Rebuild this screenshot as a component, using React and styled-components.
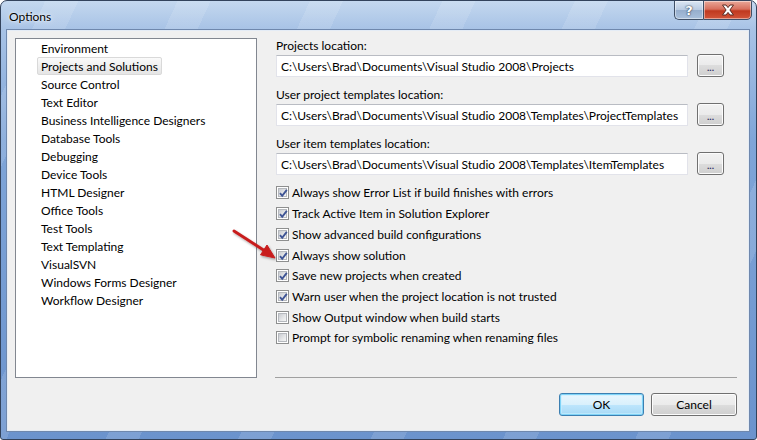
import styled, { createGlobalStyle, css } from "styled-components";

const GlobalStyle = createGlobalStyle`
  html, body {
    margin: 0;
    padding: 0;
    background: #ffffff;
  }
  body {
    font-family: Lato, "Liberation Sans", sans-serif;
    font-size: 12px;
    color: #000000;
  }
`;

const Window = styled.div`
  position: relative;
  box-sizing: border-box;
  width: 757px;
  height: 440px;
  display: flex;
  flex-direction: column;
  padding: 0 7px 8px 6px;
  border: 1px solid #33435c;
  border-radius: 7px 7px 3px 3px;
  overflow: hidden;
  background:
    repeating-linear-gradient(115deg, rgba(255, 255, 255, 0) 0 40px, rgba(255, 255, 255, 0.12) 40px 70px, rgba(255, 255, 255, 0) 70px 120px),
    linear-gradient(180deg, #c4d8ef 0, #a8c3e6 28px, #7fa5d8 140px, #6b93cd 100%);
`;

const TitleBar = styled.div`
  height: 29px;
  flex: none;
  display: flex;
  justify-content: space-between;
  margin: 0 -7px 0 -6px;
  padding: 0 4px 0 8px;
`;

const Title = styled.div`
  align-self: center;
  margin-top: 1px;
  font-size: 12px;
  text-shadow: 0 0 6px rgba(255, 255, 255, 0.9), 0 0 2px rgba(255, 255, 255, 0.9);
`;

const Caption = styled.div`
  display: flex;
  align-self: flex-start;
  margin-top: -1px;
`;

const captionBase = css`
  box-sizing: border-box;
  height: 20px;
  display: flex;
  align-items: center;
  justify-content: center;
  border: 1px solid #3f4f66;
  box-shadow: inset 0 0 0 1px rgba(255, 255, 255, 0.45);
`;

const HelpBtn = styled.div`
  ${captionBase};
  width: 29px;
  border-right: none;
  border-radius: 0 0 0 5px;
  background: linear-gradient(180deg, #dbe6f3 0%, #b9cbe2 48%, #96aecd 52%, #a9c0dc 100%);
  color: #ffffff;
  font-family: "DejaVu Sans", sans-serif;
  font-weight: bold;
  font-size: 13px;
  text-shadow: 0 0 2px #2d3a4e, 0 0 1px #2d3a4e;
`;

const CloseBtn = styled.div`
  ${captionBase};
  width: 49px;
  border-radius: 0 0 5px 0;
  background: linear-gradient(180deg, #e9a899 0%, #d7705e 45%, #c0391f 55%, #d2553a 100%);
`;

const Client = styled.div`
  flex: 1;
  box-sizing: border-box;
  display: flex;
  flex-direction: column;
  padding: 7px 11px 0 7px;
  background: #f0f0f0;
  border: 1px solid #e4ecf6;
  box-shadow: 0 0 0 1px #6f88ad;
`;

const Body = styled.div`
  display: flex;
  gap: 18px;
  height: 340px;
`;

const TreeList = styled.div`
  box-sizing: border-box;
  width: 242px;
  flex: none;
  border: 1px solid #828790;
  background: #ffffff;
`;

const TreeRow = styled.div`
  height: 18px;
  display: flex;
  padding-left: 21px;
`;

const TreeItem = styled.div`
  box-sizing: border-box;
  display: flex;
  align-items: center;
  padding: 0 3px;
  border: 1px solid transparent;
  border-radius: 2px;
  ${(p) =>
    p.$selected &&
    css`
      border-color: #d9d9d9;
      background: linear-gradient(180deg, #fafafa, #e5e5e5);
    `}
`;

const Panel = styled.div`
  flex: 1;
  display: flex;
  flex-direction: column;
  padding-left: 1px;
`;

const Fields = styled.div`
  display: flex;
  flex-direction: column;
  gap: 10px;
`;

const FieldLabel = styled.div`
  height: 16px;
  line-height: 16px;
  margin-bottom: 1px;
`;

const FieldRow = styled.div`
  display: flex;
  gap: 9px;
`;

const PathBox = styled.div`
  box-sizing: border-box;
  width: 412px;
  height: 22px;
  display: flex;
  align-items: center;
  padding: 0 4px;
  background: #ffffff;
  border: 1px solid #e2e3ea;
  border-top-color: #b9bcc3;
  white-space: nowrap;
  overflow: hidden;
`;

const pushButton = css`
  box-sizing: border-box;
  display: flex;
  align-items: center;
  justify-content: center;
  border: 1px solid #707070;
  border-radius: 3px;
  background: linear-gradient(180deg, #f2f2f2 0%, #ebebeb 50%, #dddddd 50%, #cfcfcf 100%);
  box-shadow: inset 0 0 0 1px #fcfcfc;
  font-family: inherit;
  font-size: 12px;
  color: #000000;
`;

const BrowseBtn = styled.div`
  ${pushButton};
  width: 27px;
  height: 23px;
  margin-top: -1px;
  padding-top: 3px;
  font-size: 10px;
  font-weight: bold;
  color: #333366;
`;

const Checks = styled.div`
  margin-top: 7.6px;
  display: flex;
  flex-direction: column;
`;

const CheckRow = styled.div`
  height: 20.7px;
  display: flex;
  align-items: center;
  gap: 3px;
`;

const CheckBox = styled.span`
  position: relative;
  box-sizing: border-box;
  width: 13px;
  height: 13px;
  flex: none;
  border: 1px solid #8e8f8f;
  background: #ffffff;
  &::before {
    content: "";
    position: absolute;
    inset: 1px;
    background: linear-gradient(135deg, #c9ccd1 0%, #e6e7e9 60%, #f5f5f5 100%);
    border: 1px solid #b5b8bd;
    box-sizing: border-box;
  }
  svg {
    position: absolute;
    left: 0;
    top: 0;
  }
`;

const Separator = styled.div`
  margin-top: auto;
  margin-left: -1px;
  height: 1px;
  background: #a0a0a0;
`;

const Footer = styled.div`
  display: flex;
  justify-content: flex-end;
  gap: 7px;
  margin-top: 15px;
`;

const DlgButton = styled.div`
  ${pushButton};
  width: ${(p) => p.$width}px;
  height: 23px;
  ${(p) =>
    p.$default &&
    css`
      border-color: #3c7fb1;
      background: linear-gradient(180deg, #eaf6fd 0%, #d9f0fc 50%, #bee6fd 50%, #a7d9f5 100%);
      box-shadow: inset 0 0 0 1px #7fd3f7, inset 0 0 0 2px rgba(200, 238, 255, 0.6);
    `}
`;

const Arrow = styled.svg`
  position: absolute;
  left: 0;
  top: 0;
  pointer-events: none;
`;

const pages = [
  "Environment",
  "Projects and Solutions",
  "Source Control",
  "Text Editor",
  "Business Intelligence Designers",
  "Database Tools",
  "Debugging",
  "Device Tools",
  "HTML Designer",
  "Office Tools",
  "Test Tools",
  "Text Templating",
  "VisualSVN",
  "Windows Forms Designer",
  "Workflow Designer",
];

const locations = [
  ["Projects location:", "C:\\Users\\Brad\\Documents\\Visual Studio 2008\\Projects"],
  ["User project templates location:", "C:\\Users\\Brad\\Documents\\Visual Studio 2008\\Templates\\ProjectTemplates"],
  ["User item templates location:", "C:\\Users\\Brad\\Documents\\Visual Studio 2008\\Templates\\ItemTemplates"],
];

const options = [
  ["Always show Error List if build finishes with errors", true],
  ["Track Active Item in Solution Explorer", true],
  ["Show advanced build configurations", true],
  ["Always show solution", true],
  ["Save new projects when created", true],
  ["Warn user when the project location is not trusted", true],
  ["Show Output window when build starts", false],
  ["Prompt for symbolic renaming when renaming files", false],
];

const Check = ({ checked }) => (
  <CheckBox>
    {checked && (
      <svg width="13" height="13" viewBox="0 0 13 13">
        <path d="M3 6.2 L5.2 8.8 L9.8 2.8" fill="none" stroke="#3f5595" strokeWidth="1.9" />
      </svg>
    )}
  </CheckBox>
);

const App = () => {
  return (
    <>
      <GlobalStyle />
      <Window>
        <TitleBar>
          <Title>Options</Title>
          <Caption>
            <HelpBtn>?</HelpBtn>
            <CloseBtn>
              <svg width="14" height="12" viewBox="0 0 14 12">
                <path
                  d="M1.5 1 H5 L7 3.6 L9 1 H12.5 L8.9 6 L12.5 11 H9 L7 8.4 L5 11 H1.5 L5.1 6 Z"
                  fill="#ffffff"
                  stroke="#5a2a22"
                  strokeWidth="1"
                  strokeLinejoin="round"
                />
              </svg>
            </CloseBtn>
          </Caption>
        </TitleBar>

        <Client>
          <Body>
            <TreeList>
              {pages.map((name, idx) => (
                <TreeRow key={name}>
                  <TreeItem $selected={idx === 1}>{name}</TreeItem>
                </TreeRow>
              ))}
            </TreeList>

            <Panel>
              <Fields>
                {locations.map(([label, path]) => (
                  <div key={label}>
                    <FieldLabel>{label}</FieldLabel>
                    <FieldRow>
                      <PathBox>{path}</PathBox>
                      <BrowseBtn>...</BrowseBtn>
                    </FieldRow>
                  </div>
                ))}
              </Fields>

              <Checks>
                {options.map(([text, checked]) => (
                  <CheckRow key={text}>
                    <Check checked={checked} />
                    <span>{text}</span>
                  </CheckRow>
                ))}
              </Checks>

              <Separator />
            </Panel>
          </Body>

          <Footer>
            <DlgButton $default $width={85}>OK</DlgButton>
            <DlgButton $width={86}>Cancel</DlgButton>
          </Footer>
        </Client>

        {/* red annotation arrow */}
        <Arrow width="757" height="440" viewBox="0 0 757 440">
          <defs>
            <filter id="arrowShadow" x="-20%" y="-20%" width="140%" height="140%">
              <feDropShadow dx="1" dy="1.5" stdDeviation="1.2" floodColor="#000" floodOpacity="0.35" />
            </filter>
          </defs>
          <g filter="url(#arrowShadow)" fill="#c81e1e" stroke="#c81e1e">
            <line x1="233" y1="230" x2="264" y2="250" strokeWidth="3" strokeLinecap="round" />
            <polygon points="274,257 259.5,253.8 266,244" strokeWidth="1" strokeLinejoin="round" />
          </g>
        </Arrow>
      </Window>
    </>
  );
};

export default App;
